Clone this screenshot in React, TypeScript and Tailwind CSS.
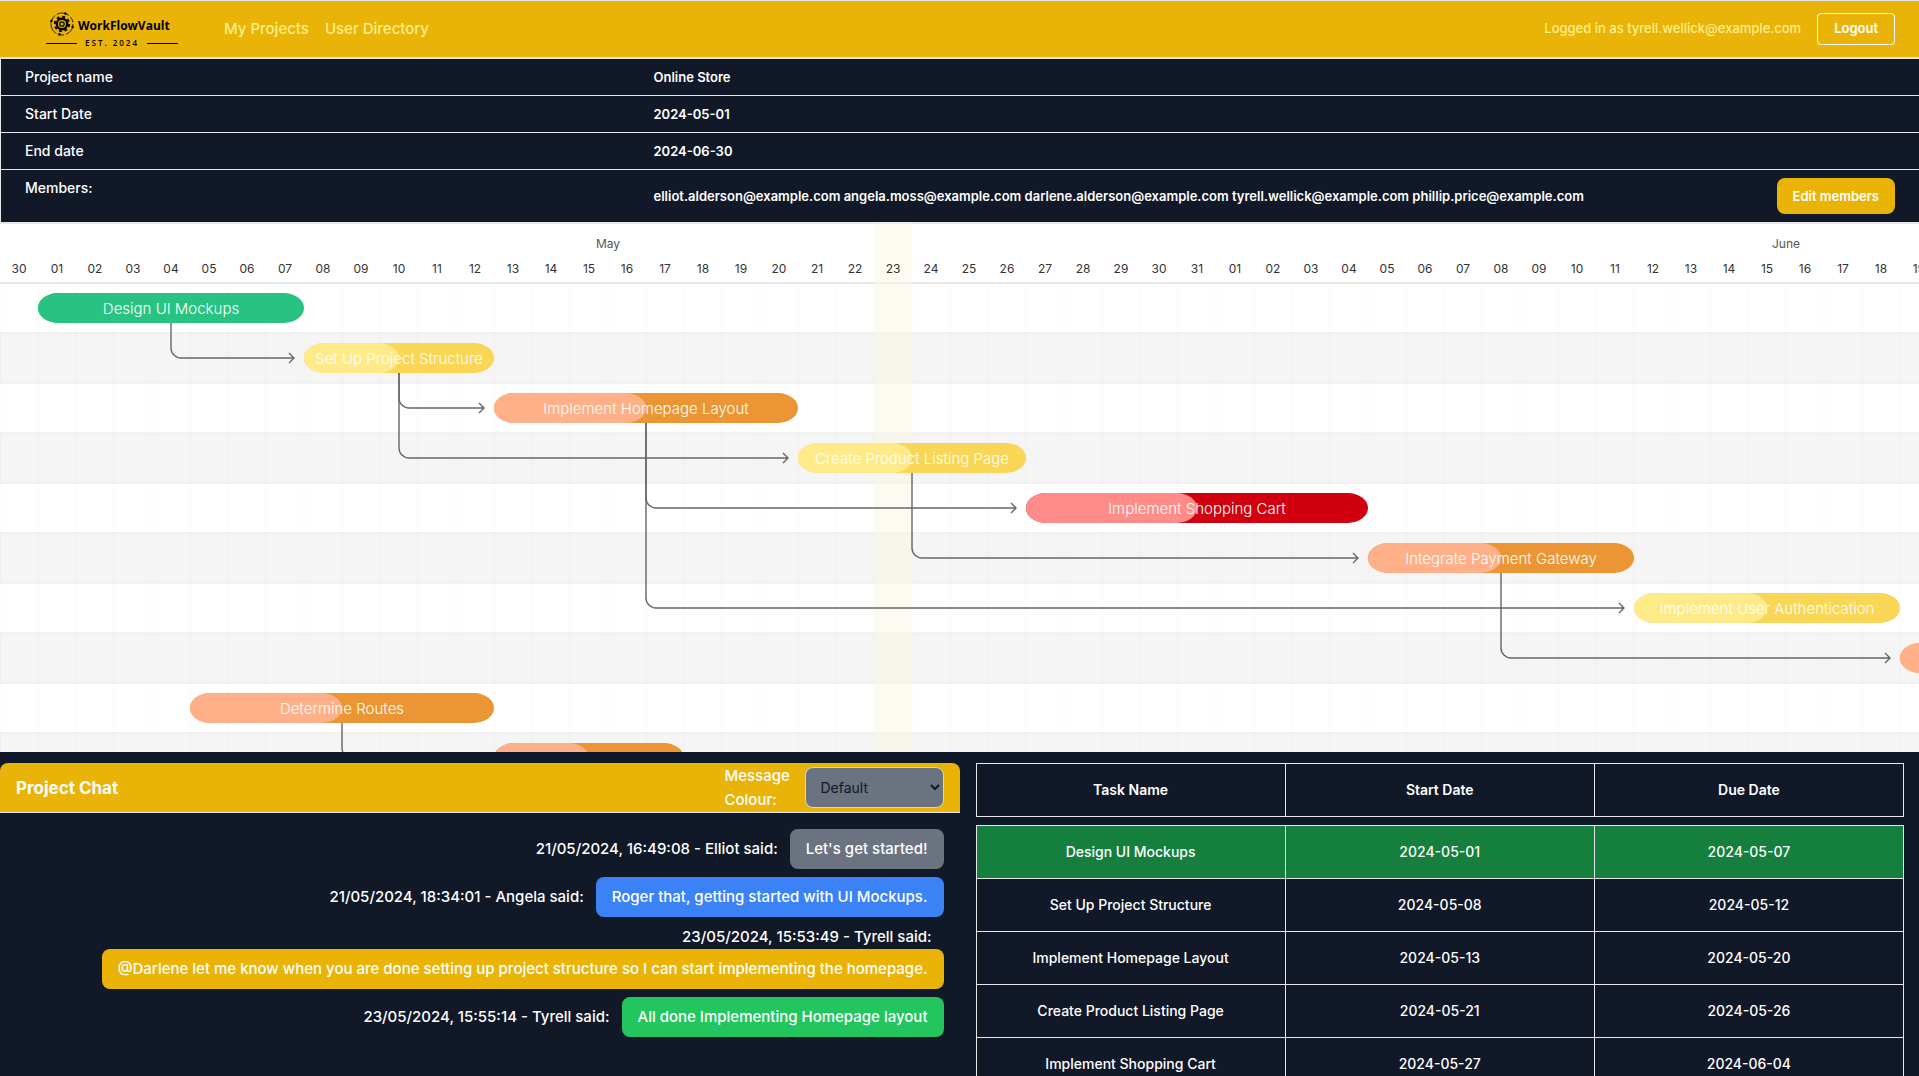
import React from "react";

type Tone = "green" | "yellow" | "orange" | "red";

interface Task {
  name: string;
  start: number;
  days: number;
  tone: Tone;
}

const COL = 38;
const ROW = 50;
const HEADER = 60;
const DAYS = 62;
const CHART_WIDTH = COL * DAYS;

const tones: Record<Tone, { bar: string; progress: string }> = {
  green: { bar: "fill-[#28c283]", progress: "fill-[#28c283]" },
  yellow: { bar: "fill-[#f9d656]", progress: "fill-[#ffea8a]" },
  orange: { bar: "fill-[#eb9534]", progress: "fill-[#ffb088]" },
  red: { bar: "fill-[#d2000f]", progress: "fill-[#ff8c88]" },
};

const tasks: Task[] = [
  { name: "Design UI Mockups", start: 1, days: 7, tone: "green" },
  { name: "Set Up Project Structure", start: 8, days: 5, tone: "yellow" },
  { name: "Implement Homepage Layout", start: 13, days: 8, tone: "orange" },
  { name: "Create Product Listing Page", start: 21, days: 6, tone: "yellow" },
  { name: "Implement Shopping Cart", start: 27, days: 9, tone: "red" },
  { name: "Integrate Payment Gateway", start: 36, days: 7, tone: "orange" },
  { name: "Implement User Authentication", start: 43, days: 7, tone: "yellow" },
  { name: "Testing and Bug Fixes", start: 50, days: 8, tone: "orange" },
  { name: "Determine Routes", start: 5, days: 8, tone: "orange" },
  { name: "Set Up Routes", start: 13, days: 5, tone: "orange" },
];

const links: [number, number][] = [
  [0, 1],
  [1, 2],
  [1, 3],
  [2, 4],
  [3, 5],
  [2, 6],
  [5, 7],
  [8, 9],
];

const dayLabel = (i: number) => {
  const d = i === 0 ? 30 : i <= 31 ? i : i - 31;
  return String(d).padStart(2, "0");
};

const barTop = (row: number) => HEADER + 11 + row * ROW;

function Gantt() {
  const height = HEADER + 1 + ROW * 10;
  return (
    <svg width={CHART_WIDTH} height={height} role="img" aria-label="Project timeline" className="block max-w-none">
      <rect width={CHART_WIDTH} height={height} className="fill-white" />
      {tasks.map((t, i) =>
        i % 2 ? (
          <rect
            key={t.name}
            y={HEADER + 1 + i * ROW}
            width={CHART_WIDTH}
            height={ROW}
            className="fill-[#f5f5f5] stroke-[#f2f2f2] stroke-2"
          />
        ) : null,
      )}
      {Array.from({ length: DAYS }, (_, i) => (
        <line key={i} x1={i * COL} x2={i * COL} y1={HEADER} y2={height} className="stroke-black/[0.025]" />
      ))}
      <rect y={HEADER} width={CHART_WIDTH} height={2} className="fill-[#e8e8e8]" />
      <rect width={CHART_WIDTH} height={2} className="fill-gray-200" />
      <rect x={23 * COL} y={1} width={COL} height={height} className="fill-[#fcf8e3] opacity-50" />
      <text x={16 * COL} y={26} textAnchor="middle" className="fill-[#555] text-[12px]">
        May
      </text>
      <text x={47 * COL} y={26} textAnchor="middle" className="fill-[#555] text-[12px]">
        June
      </text>
      {Array.from({ length: DAYS }, (_, i) => (
        <text key={i} x={i * COL + 19} y={51} textAnchor="middle" className="fill-[#333] text-[12px]">
          {dayLabel(i)}
        </text>
      ))}
      {links.map(([from, to]) => {
        const a = tasks[from];
        const x = (a.start + a.days / 2) * COL;
        const y = barTop(to) + 15;
        return (
          <path
            key={`${from}-${to}`}
            d={`M${x} ${barTop(from) + 30}V${y - 10}a10 10 0 0 0 10 10H${tasks[to].start * COL - 10}m-5-5l5 5l-5 5`}
            className="fill-none stroke-[#666] stroke-[1.4]"
          />
        );
      })}
      {tasks.map((t, i) => {
        const x = t.start * COL;
        const w = t.days * COL;
        return (
          <g key={t.name}>
            <rect x={x} y={barTop(i)} width={w} height={30} rx={20} ry={15} className={tones[t.tone].bar} />
            <rect x={x} y={barTop(i)} width={w / 2} height={30} rx={20} ry={15} className={tones[t.tone].progress} />
            <text
              x={x + w / 2}
              y={barTop(i) + 21}
              textAnchor="middle"
              className="fill-white text-[15px] font-light"
            >
              {t.name}
            </text>
          </g>
        );
      })}
    </svg>
  );
}

function Logo() {
  return (
    <a href="#" aria-label="WorkFlowVault" className="flex w-[132px] flex-col pt-1 text-black">
      <span className="flex h-6 items-center gap-1 pl-1">
        <svg viewBox="0 0 24 24" className="size-6 shrink-0" fill="none" stroke="currentColor">
          <circle cx="12" cy="12" r="11" strokeWidth="0.8" strokeDasharray="13 2 6 2" />
          <circle cx="12" cy="12" r="5.2" strokeWidth="2.4" />
          <circle cx="12" cy="12" r="7.2" strokeWidth="2" strokeDasharray="2.9 2.755" />
          <circle cx="12" cy="12" r="2.2" strokeWidth="1.3" />
          <g fill="currentColor" stroke="none">
            <circle cx="15.4" cy="1.6" r="1.3" />
            <circle cx="1.4" cy="9" r="1.2" />
            <circle cx="22.6" cy="15" r="1.2" />
            <circle cx="9.4" cy="22.4" r="1.3" />
          </g>
        </svg>
        <span className="pt-1 font-['Open_Sans'] text-[12px] leading-none font-bold">WorkFlowVault</span>
      </span>
      <span className="flex items-center justify-between">
        <span className="h-px w-[31px] bg-black" />
        <span className="font-['Open_Sans'] text-[8px] leading-[14px] font-semibold tracking-[2px]">EST. 2024</span>
        <span className="h-px w-[31px] bg-black" />
      </span>
    </a>
  );
}

const details = [
  ["Project name", "Online Store"],
  ["Start Date", "2024-05-01"],
  ["End date", "2024-06-30"],
];

const messages = [
  { meta: "21/05/2024, 16:49:08 - Elliot said:", text: "Let's get started!", color: "bg-[#6b7280]" },
  { meta: "21/05/2024, 18:34:01 - Angela said:", text: "Roger that, getting started with UI Mockups.", color: "bg-[#3b82f6]" },
  {
    meta: "23/05/2024, 15:53:49 - Tyrell said:",
    text: "@Darlene let me know when you are done setting up project structure so I can start implementing the homepage.",
    color: "bg-[#eab308]",
  },
  { meta: "23/05/2024, 15:55:14 - Tyrell said:", text: "All done Implementing Homepage layout", color: "bg-[#22c55e]" },
];

const rows = [
  ["Design UI Mockups", "2024-05-01", "2024-05-07"],
  ["Set Up Project Structure", "2024-05-08", "2024-05-12"],
  ["Implement Homepage Layout", "2024-05-13", "2024-05-20"],
  ["Create Product Listing Page", "2024-05-21", "2024-05-26"],
  ["Implement Shopping Cart", "2024-05-27", "2024-06-04"],
];

export default function App() {
  return (
    <div className="flex h-screen flex-col overflow-hidden bg-[#111827] font-['Inter',sans-serif] text-white">
      <nav className="flex shrink-0 items-center border-y border-gray-200 bg-[#eab308] pr-6 pl-[46px]">
        <Logo />
        <div className="ml-[46px] flex gap-4 text-[15px] leading-6 font-medium text-[#fef08a]">
          <a href="#">My Projects</a>
          <a href="#">User Directory</a>
        </div>
        <div className="my-3 ml-auto flex items-center gap-4 text-[13px] font-medium">
          <span className="text-[#fef08a]">Logged in as tyrell.wellick@example.com</span>
          <button className="h-8 rounded border border-white px-4 font-semibold">Logout</button>
        </div>
      </nav>

      <table className="w-full shrink-0 border-t border-l border-gray-200 text-left text-[13px] leading-5 font-semibold">
        <tbody>
          {details.map(([label, value]) => (
            <tr key={label} className="border-b border-gray-200">
              <th scope="row" className="w-[629px] px-6 py-2 text-sm font-medium">
                {label}
              </th>
              <td className="px-6 py-2">{value}</td>
            </tr>
          ))}
          <tr>
            <th scope="row" className="px-6 py-2 align-top text-sm font-medium">
              Members:
            </th>
            <td className="px-6 py-2">
              <div className="flex items-center justify-between">
                <span>
                  elliot.alderson@example.com angela.moss@example.com darlene.alderson@example.com
                  tyrell.wellick@example.com phillip.price@example.com
                </span>
                <button className="h-9 rounded-lg bg-[#eab308] px-4">Edit members</button>
              </div>
            </td>
          </tr>
        </tbody>
      </table>

      <div className="h-[530px] shrink-0 overflow-hidden bg-white">
        <Gantt />
      </div>

      <div className="grid min-h-0 flex-1 grid-cols-2 pt-[11px]">
        <section>
          <header className="flex h-[50px] items-center justify-between rounded-t-lg border-b border-gray-200 bg-[#eab308] px-4">
            <h2 className="text-[17px] leading-7 font-bold">Project Chat</h2>
            <div className="flex items-center gap-3">
              <label htmlFor="colour" className="w-[68px] text-[15px] leading-6 font-medium">
                Message Colour:
              </label>
              <select
                id="colour"
                className="h-[41px] w-[139px] rounded-lg border border-gray-300 bg-[#6b7280] pl-[11px] text-sm text-[#111827]"
              >
                <option>Default</option>
                <option>Blue</option>
                <option>Green</option>
                <option>Yellow</option>
              </select>
            </div>
          </header>
          <ul className="flex flex-col gap-2 p-4 text-[15px] leading-6 font-medium">
            {messages.map((m) => (
              <li key={m.meta} className="flex flex-wrap items-center justify-end">
                <span className="mr-3">{m.meta}</span>
                <span className={`rounded-lg px-4 py-2 ${m.color}`}>{m.text}</span>
              </li>
            ))}
          </ul>
        </section>

        <section className="overflow-hidden pr-[15px] pl-4">
          <table className="w-full table-fixed border-collapse text-center text-sm">
            <thead>
              <tr>
                {["Task Name", "Start Date", "Due Date"].map((h) => (
                  <th key={h} scope="col" className="h-[53px] border border-gray-200 font-semibold">
                    {h}
                  </th>
                ))}
              </tr>
            </thead>
            <tbody>
              <tr aria-hidden="true">
                <td colSpan={3} className="h-[9px]" />
              </tr>
              {rows.map((r, i) => (
                <tr key={r[0]} className={i === 0 ? "bg-[#15803d]" : ""}>
                  {r.map((c) => (
                    <td key={c} className="h-[53px] border border-gray-200 font-medium">
                      {c}
                    </td>
                  ))}
                </tr>
              ))}
            </tbody>
          </table>
        </section>
      </div>
    </div>
  );
}
